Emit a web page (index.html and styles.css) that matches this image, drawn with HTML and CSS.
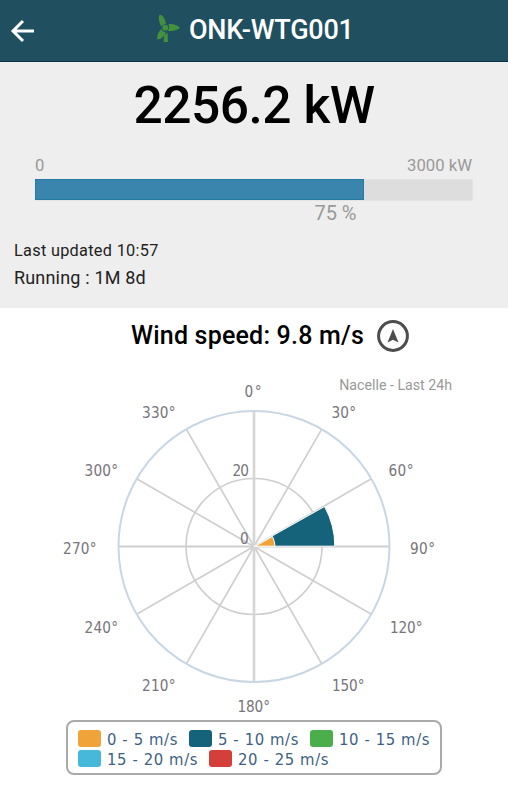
FILE: index.html
```
<!DOCTYPE html>
<html lang="en">
<head>
<meta charset="utf-8">
<title>ONK-WTG001</title>
<link rel="stylesheet" href="styles.css">
</head>
<body>
<header class="bar">
  <svg class="back" width="24" height="24" viewBox="0 0 24 24"><path d="M24 12H3M13 2L3 12l10 10" fill="none" stroke="#fff" stroke-width="3"/></svg>
  <svg class="turbine" width="24" height="30" viewBox="0 0 24 30" fill="#43903f">
    <path d="M3.500 .8C6.500 .6 9.200 4.500 9.900 9.900C7.500 10.200 6.200 11.200 5.600 12.600C3.200 9 2 4 3.500 .8z"/>
    <path d="M12.300 10.200C16.500 9.500 21.500 11 24 14C21 16.400 16 17.500 11.500 17C13.300 15.200 13.600 12.500 12.300 10.200z"/>
    <path d="M5.400 15C6.200 17 7.500 18 9.700 18C8.800 22 5 25.500 1.200 25.500C.8 21.500 2.200 17.500 5.400 15z"/>
    <circle cx="9.300" cy="13.700" r="2.900"/>
    <path d="M8.200 21.200L11.500 18.400L12 28H7.600z"/>
  </svg>
  <h1 class="title">ONK-WTG001</h1>
</header>
<section class="power">
  <div class="value">2256.2 kW</div>
  <div class="gauge">
    <div class="scale"><span>0</span><span class="max">3000 kW</span></div>
    <div class="track"><div class="fill"></div></div>
    <div class="percent">75 %</div>
  </div>
  <p class="updated">Last updated 10:57</p>
  <p class="running">Running : 1M 8d</p>
</section>
<main class="wind">
  <div class="wind-head">
    <h2 class="speed">Wind speed: 9.8 m/s</h2>
    <svg width="32" height="32" viewBox="0 0 32 32"><circle cx="16" cy="16" r="14.400" fill="none" stroke="#4d4d4d" stroke-width="3"/><path d="M16 9l5.500 13.500L16 19.800l-5.500 2.700z" fill="#4d4d4d"/></svg>
  </div>
  <div class="source">Nacelle - Last 24h</div>
  <svg class="rose" width="508" height="325" viewBox="0 395 508 325">
    <g fill="none" stroke="#cfcfcf" stroke-width="1.700">
      <circle cx="254" cy="546.500" r="68"/>
      <path d="M186.250 429.150L321.750 663.850M136.650 478.750L371.350 614.250M136.650 614.250L371.350 478.750M186.250 663.850L321.750 429.150"/>
      <path d="M118.500 546.500H389.500" stroke-width="2"/>
      <path d="M254 411V682" stroke="#d6d6d6" stroke-width="2.700"/>
    </g>
    <circle cx="254" cy="546.500" r="135.500" fill="none" stroke="#c9d6e4" stroke-width="2"/>
    <path d="M254 546.200L324.500 506.500A81 81 0 0 1 334.800 546.200z" fill="#15627b" stroke="#fff"/>
    <path d="M255.500 546.200L272.500 536.500Q274.700 541 275 546.200z" fill="#f0a338" stroke="#fff"/>
    <g class="degrees">
      <text x="244.500" y="397" textLength="17">0°</text>
      <text x="331.500" y="418" textLength="24.500">30°</text>
      <text x="388.500" y="476" textLength="25">60°</text>
      <text x="410" y="553.500" textLength="25">90°</text>
      <text x="390" y="632.500" textLength="32.500">120°</text>
      <text x="332" y="690.500" textLength="32.500">150°</text>
      <text x="237.500" y="711.500" textLength="32.500">180°</text>
      <text x="142" y="690.500" textLength="33.500">210°</text>
      <text x="84.500" y="632.500" textLength="33.500">240°</text>
      <text x="63" y="553.500" textLength="33.500">270°</text>
      <text x="84.500" y="476" textLength="33.500">300°</text>
      <text x="142" y="418" textLength="33.500">330°</text>
      <text x="232.500" y="476" textLength="16.500">20</text>
      <text x="240" y="543.500">0</text>
    </g>
  </svg>
  <div class="legend">
    <div class="row">
      <i class="swatch orange"></i><span class="l1">0 - 5 m/s</span>
      <i class="swatch teal"></i><span class="l2">5 - 10 m/s</span>
      <i class="swatch green"></i><span class="l3">10 - 15 m/s</span>
    </div>
    <div class="row">
      <i class="swatch blue"></i><span class="l4">15 - 20 m/s</span>
      <i class="swatch red"></i><span class="l5">20 - 25 m/s</span>
    </div>
  </div>
</main>
</body>
</html>
```
FILE: styles.css
```
* { box-sizing: border-box; margin: 0; padding: 0; }
body { width: 508px; height: 800px; background: #fff; font-family: Roboto, sans-serif; overflow: hidden; }
.bar { display: flex; align-items: flex-start; height: 62px; background: #204f60; border-bottom: 1px solid #0a3148; }
.back { margin: 19px 0 0 10px; }
.turbine { margin: 14px 0 0 122px; }
.title { margin: 14px 0 0 9px; font-size: 27px; line-height: 32px; font-weight: 500; letter-spacing: -.25px; color: #fff; white-space: nowrap; }
.power { height: 246px; background: #eee; color: #222; }
.value { padding-top: 13px; height: 94px; font-size: 51.500px; line-height: 62px; font-weight: 500; letter-spacing: -.5px; color: #000; text-align: center; }
.gauge { width: 438px; margin-left: 35px; color: #999; }
.scale { display: flex; justify-content: space-between; height: 23px; font-size: 16.700px; line-height: 20px; }
.max { margin-right: 1px; }
.track { height: 22px; background: #ddd; border: 1px solid #e3e3e3; border-left: 0; }
.fill { width: 329px; height: 21px; margin-top: -1px; background: #3985ad; border: 1px solid #2479a5; }
.percent { width: 321.500px; height: 40px; font-size: 20px; line-height: 25px; text-align: right; }
.updated { padding-left: 14px; font-size: 16.300px; line-height: 20px; letter-spacing: .3px; }
.running { padding-left: 14px; margin-top: 5px; font-size: 18px; line-height: 24px; letter-spacing: .18px; }
.wind-head { display: flex; gap: 13px; height: 68px; padding: 12px 0 0 131px; }
.speed { font-size: 25px; line-height: 32px; font-weight: 500; letter-spacing: .2px; color: #000; white-space: nowrap; }
.source { width: 452px; height: 19px; font-size: 14.200px; line-height: 18px; text-align: right; color: #999; }
.rose { display: block; overflow: visible; }
.degrees { font: 15.200px "DejaVu Sans Condensed", "DejaVu Sans", sans-serif; font-stretch: condensed; fill: #77747a; }
.legend { width: 376px; height: 55px; margin-left: 66px; padding: 7px 0 0 10px; border: 2px solid #aaa; border-radius: 8px; background: #fff; font: 16.500px/22px "DejaVu Sans Condensed", "DejaVu Sans", sans-serif; font-stretch: condensed; letter-spacing: .6px; color: #405f84; }
.row { display: flex; height: 20px; white-space: nowrap; }
.swatch { width: 23px; height: 17px; margin: 1px 6px 0 0; border-radius: 3px; flex: none; }
.row span { flex: none; }
.l1 { width: 82px; }
.l2 { width: 92px; }
.l4 { width: 102px; }
.orange { background: #f0a338; }
.teal { background: #15627b; }
.green { background: #4aaf4b; }
.blue { background: #46b8da; }
.red { background: #d43f3a; }
```
